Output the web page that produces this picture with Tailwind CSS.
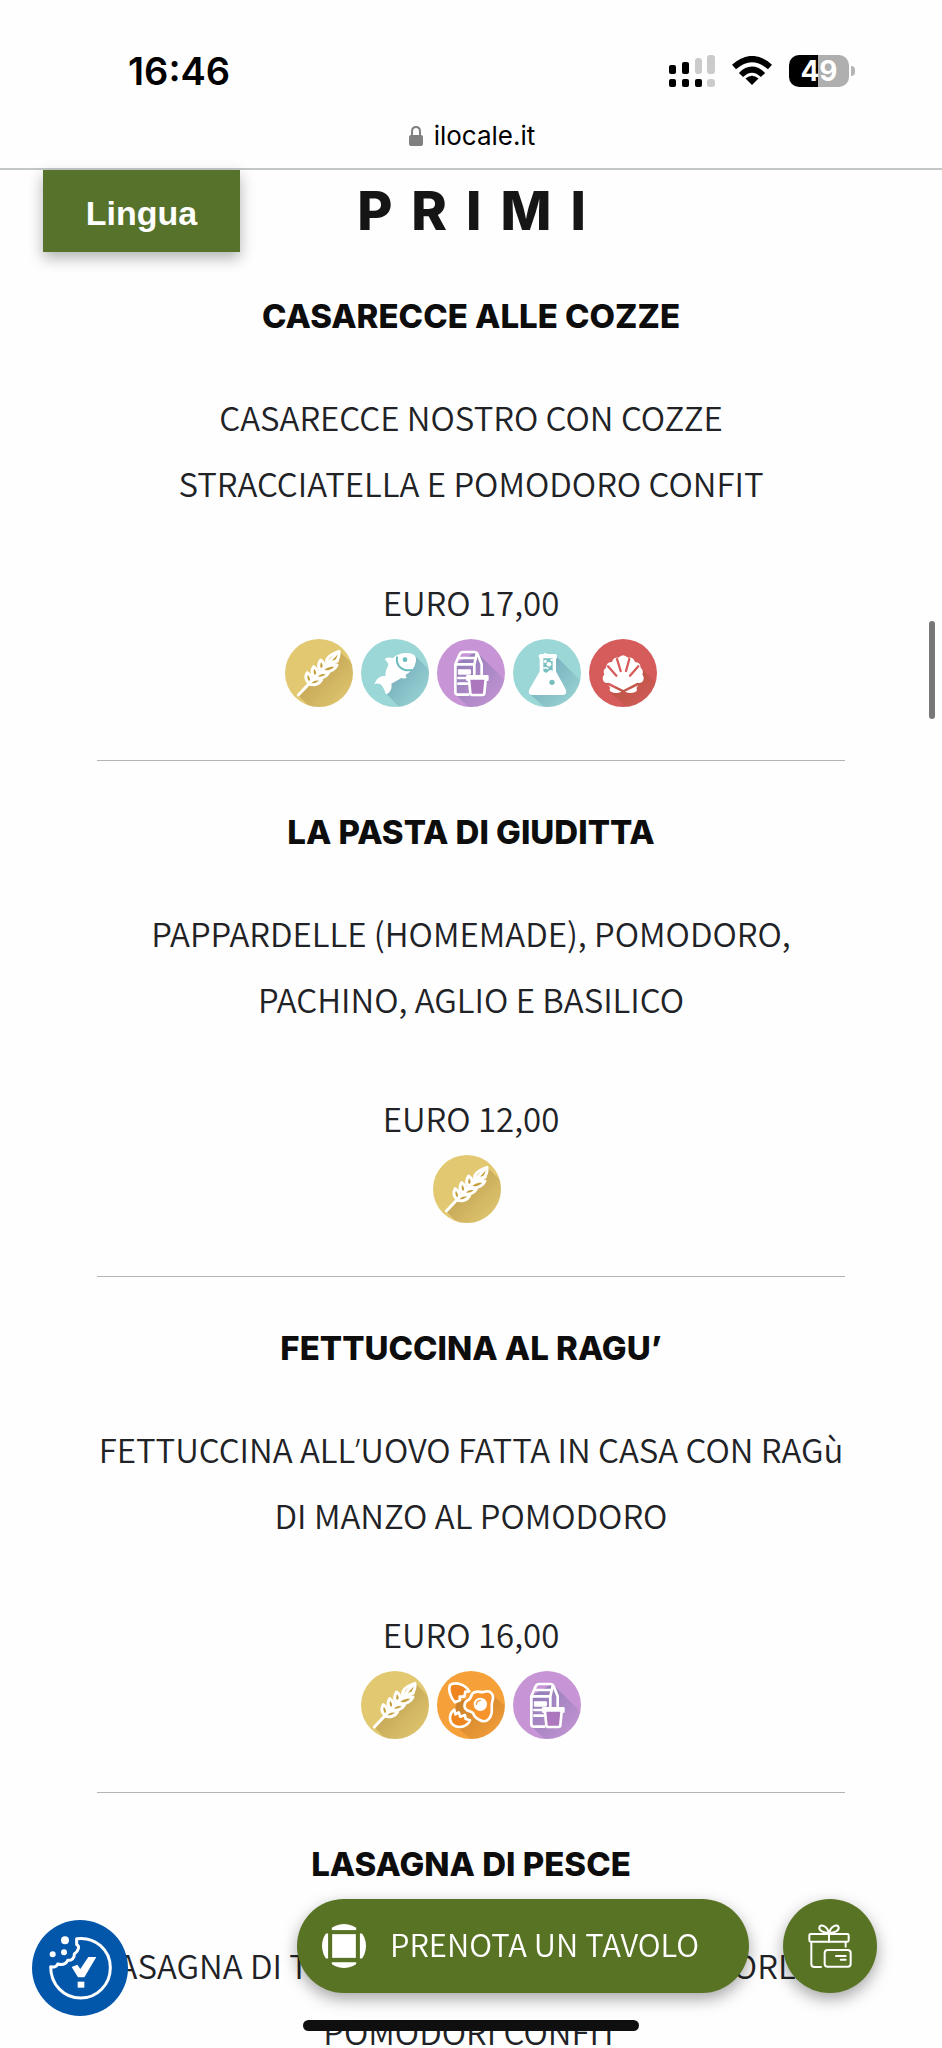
<!DOCTYPE html>
<html lang="it">
<head>
  <meta charset="UTF-8">
  <meta name="viewport" content="width=device-width, initial-scale=1.0">
  <title>Menu - Primi</title>
  <script src="https://cdn.jsdelivr.net/npm/@tailwindcss/browser@4"></script>
</head>
<body class="bg-[#fefefe] text-[#212226] font-['Noto_Sans_CJK_SC',sans-serif] font-[350] h-screen overflow-hidden">

  <!-- Icone allergeni -->
  <svg class="absolute size-0" aria-hidden="true">
    <defs>
      <linearGradient id="shade" x1="0.1" y1="0.1" x2="0.75" y2="0.75">
        <stop offset="0" stop-color="#7a4a10" stop-opacity=".36"/>
        <stop offset="1" stop-color="#7a4a10" stop-opacity=".03"/>
      </linearGradient>
      <linearGradient id="shade-cool" x1="0.1" y1="0.1" x2="0.75" y2="0.75">
        <stop offset="0" stop-color="#2b4f80" stop-opacity=".34"/>
        <stop offset="1" stop-color="#2b4f80" stop-opacity=".03"/>
      </linearGradient>
      <clipPath id="disc"><circle cx="102" cy="102" r="102"/></clipPath>
    </defs>
    <symbol id="wheat" viewBox="0 0 204 204">
      <circle cx="102" cy="102" r="102" fill="#e1c871"/>
      <path clip-path="url(#disc)" d="M162 36 L230 104 L130 230 L100 230 L40 169 Z" fill="url(#shade)"/>
      <g fill="none" stroke="#fff" stroke-width="9" stroke-linecap="round" stroke-linejoin="round">
        <path d="M40 168 L72 134"/>
        <path fill="#c4a03c" d="M72 134 C60 122 61 110 67 101 C77 107 81 118 79 129 Z"/>
        <path fill="#c4a03c" d="M90 116 C78 104 80 92 86 83 C96 89 100 100 97 111 Z"/>
        <path fill="#c4a03c" d="M109 96 C98 84 100 72 107 63 C117 70 120 81 116 92 Z"/>
        <path fill="#c4a03c" d="M127 76 C120 62 130 48 162 37 C164 57 154 76 127 76 Z"/>
        <path fill="#c4a03c" d="M72 134 C80 121 96 117 110 122 C103 135 86 142 72 134 Z"/>
        <path fill="#c4a03c" d="M92 114 C100 101 116 98 130 103 C123 115 105 122 92 114 Z"/>
        <path fill="#c4a03c" d="M111 94 C119 81 137 77 156 78 C148 96 125 104 111 94 Z"/>
        <path d="M127 76 C138 70 148 67 157 66 M72 134 L158 40"/>
      </g>
    </symbol>
    <symbol id="fish" viewBox="0 0 204 204">
      <circle cx="102" cy="102" r="102" fill="#9ad7d6"/>
      <path clip-path="url(#disc)" d="M160 48 L230 118 L160 230 L130 220 L76 164 L80 80 Z" fill="url(#shade-cool)"/>
      <path fill="#fff" d="M165 62 C167 46 150 40 130 42 C114 44 102 50 95 58 C87 54 77 56 71 61 C77 66 81 72 82 78 C75 90 73 102 73 112 C62 108 47 116 40 136 C50 131 60 135 65 143 C70 151 72 158 75 166 C88 161 94 148 91 134 C102 128 112 123 120 117 C125 119 132 119 138 116 C135 113 133 110 134 107 C152 98 164 82 165 62 Z"/>
      <path fill="none" stroke="#6bbcbd" stroke-width="6" stroke-linecap="round" d="M108 55 C104 78 122 98 151 93"/>
      <circle cx="132" cy="62" r="7" fill="#6bbcbd"/>
    </symbol>
    <symbol id="milk" viewBox="0 0 204 204">
      <circle cx="102" cy="102" r="102" fill="#c795d5"/>
      <path clip-path="url(#disc)" d="M118 38 L230 150 L130 230 L110 220 L56 166 L60 72 Z" fill="url(#shade-cool)"/>
      <g fill="none" stroke="#fff" stroke-width="8" stroke-linecap="round" stroke-linejoin="round">
        <path d="M94 167 H63 Q55 167 55 160 V76 L68 46 Q71 39 78 39 H112 Q119 39 122 46 L134 76 V106"/>
        <path d="M58 76 H112 V106 M119 45 L112 76 V90 M68 57 H114 M66 95 H98 V103 H66 M64 117 H88 M64 134 H90"/>
        <path fill="#ad77be" d="M91 112 H151 V122 H146 L142 162 Q142 168 136 168 H106 Q101 168 100 162 L96 122 H91 Z"/>
        <path d="M94 118 H148"/>
      </g>
    </symbol>
    <symbol id="flask" viewBox="0 0 204 204">
      <circle cx="102" cy="102" r="102" fill="#9ad7d6"/>
      <path clip-path="url(#disc)" d="M128 50 L230 152 L130 235 L50 165 L84 100 Z" fill="url(#shade-cool)"/>
      <path fill="#fff" stroke="#fff" stroke-width="6" stroke-linejoin="round" d="M80 52 Q80 48 86 48 H93 Q97 42 101 48 H124 Q130 48 129 54 L126 60 V98 L156 154 Q159 165 150 165 H57 Q48 165 51 154 L83 98 V60 Z"/>
      <path fill="#79bfc0" d="M91 58 H119 V97 Q113 90 107 96 Q101 104 94 99 L91 96 Z"/>
      <circle cx="97" cy="67" r="5" fill="#fff"/>
      <circle cx="108" cy="76" r="7" fill="#fff"/>
      <circle cx="116" cy="63" r="4" fill="#fff"/>
      <path fill="none" stroke="#fff" stroke-width="4" d="M91 88 Q98 84 106 90"/>
      <circle cx="117" cy="130" r="8" fill="#79bfc0"/>
    </symbol>
    <symbol id="shell" viewBox="0 0 204 204">
      <circle cx="102" cy="102" r="102" fill="#d65b5b"/>
      <path clip-path="url(#disc)" d="M155 86 L230 160 L140 230 L62 158 Z" fill="url(#shade)"/>
      <path fill="#fff" d="M103 153 L60 131 Q48 134 43 126 Q38 116 46 106 Q40 94 51 86 Q52 69 69 69 Q74 54 88 56 Q102 41 117 56 Q132 53 138 69 Q154 70 155 86 Q165 94 160 106 Q167 116 162 126 Q157 134 145 131 Z"/>
      <path fill="#fff" d="M58 139 L98 158 Q80 166 66 158 Q59 154 64 147 Z M148 139 L108 158 Q126 166 140 158 Q147 154 142 147 Z"/>
      <path fill="none" stroke="#d65b5b" stroke-width="7" stroke-linecap="round" d="M84 60 L95 96 M121 60 L111 96 M57 82 L82 110 M148 82 L123 110"/>
    </symbol>
    <symbol id="egg" viewBox="0 0 204 204">
      <circle cx="102" cy="102" r="102" fill="#f6a03a"/>
      <path clip-path="url(#disc)" d="M166 70 L230 130 L130 230 L45 155 L60 90 Z" fill="url(#shade)"/>
      <g fill="#ef851f" stroke="#fff" stroke-width="8" stroke-linejoin="round" stroke-linecap="round">
        <path d="M54 94 C40 79 33 57 39 42 C56 31 85 40 97 61 L85 62 L82 77 L68 77 L69 88 Z"/>
        <path d="M52 116 C36 127 35 149 48 161 C64 174 91 168 99 148 L86 144 L84 132 L70 137 L65 124 L55 130 Z"/>
        <path fill="#f6942b" d="M106 68 C118 54 133 68 143 62 C160 57 173 70 166 91 C162 101 166 112 164 124 C161 145 145 157 128 147 C118 142 112 140 110 130 C108 122 98 122 89 117 C78 109 82 91 94 87 C102 84 101 75 106 68 Z"/>
      </g>
      <circle cx="130" cy="100" r="18" fill="#fff" stroke="#fff" stroke-width="4"/>
      <path fill="none" stroke="#f29a45" stroke-width="4" stroke-linecap="round" d="M118 100 Q119 89 130 88"/>
    </symbol>
  </svg>

  <!-- Barra di stato e indirizzo -->
  <header class="border-b-2 border-[#c4c8c8] text-black font-['Inter',sans-serif] font-normal">
    <div class="flex items-center justify-between pl-32 pr-[87px] pt-[46px] h-24">
      <time class="text-[38px] leading-[50px] font-semibold">16:46</time>
      <div class="flex items-center gap-4">
        <svg class="w-[46px] h-8" viewBox="0 0 46 32" aria-label="Segnale">
          <g fill="#000">
            <rect x="0" y="10" width="7" height="9" rx="2"/>
            <rect x="13" y="7" width="7" height="12" rx="2"/>
            <rect x="0" y="24" width="7" height="8" rx="2"/>
            <rect x="13" y="24" width="7" height="8" rx="2"/>
            <rect x="26" y="24" width="7" height="8" rx="2"/>
          </g>
          <g fill="#cbcbcb">
            <rect x="26" y="3" width="7" height="16" rx="3"/>
            <rect x="38" y="0" width="8" height="19" rx="3"/>
            <rect x="38" y="24" width="8" height="8" rx="3"/>
          </g>
        </svg>
        <svg class="w-[42px] h-[30px]" viewBox="0 0 42 30" fill="none" stroke="#000" stroke-width="6" aria-label="Wi-Fi">
          <path d="M3 11 Q21 -5 39 11"/>
          <path d="M10 19 Q21 8 32 19"/>
          <path d="M21 29 L14.500 22.500 Q21 17 27.500 22.500 Z" fill="#000" stroke="none"/>
        </svg>
        <div class="flex items-center gap-[2px]">
          <div class="flex items-center justify-center w-[60px] h-8 rounded-[10px] bg-linear-to-r from-black from-49% to-[#afafaf] to-49% text-white text-[28px] leading-8 font-bold">49</div>
          <div class="w-1 h-[10px] rounded-r-full bg-[#b5b5b5]"></div>
        </div>
      </div>
    </div>
    <div class="flex items-center justify-center gap-[11px] h-[72px] pt-2 pl-[2px]">
      <svg class="w-[14px] h-5" viewBox="0 0 14 20" aria-hidden="true">
        <path d="M3 10 V5.500 Q3 1 7 1 Q11 1 11 5.500 V10" fill="none" stroke="#808080" stroke-width="2"/>
        <rect y="9" width="14" height="11" rx="2" fill="#808080"/>
      </svg>
      <span class="text-[26px] leading-8">ilocale.it</span>
    </div>
  </header>

  <main class="relative px-[97px]">
    <button type="button" class="absolute left-[43px] top-0 w-[197px] h-[82px] pt-1 bg-[#56722b] text-white text-[34px] leading-[66px] font-bold font-['Liberation_Sans',sans-serif] shadow-[0_6px_14px_rgba(0,0,0,0.3)]">Lingua</button>

    <h1 class="h-[75px] pt-2 pl-5 text-center text-[#151515] text-[54px] leading-[66px] font-extrabold tracking-[19px] font-['Inter',sans-serif]">PRIMI</h1>

    <article class="flex flex-col items-center pt-[38px] pb-[53px] border-b border-[#b3b5b5] text-[33px] leading-[66px] text-center">
      <h2 class="text-[#0d0d0d] text-[33px] font-extrabold font-['Inter',sans-serif]">CASARECCE ALLE COZZE</h2>
      <p class="mt-[35px]">CASARECCE NOSTRO CON COZZE<br>STRACCIATELLA E POMODORO CONFIT</p>
      <p class="mt-[53px]">EURO 17,00</p>
      <div class="flex gap-2 mt-1">
        <svg class="size-[68px]" aria-label="Glutine"><use href="#wheat"/></svg>
        <svg class="size-[68px]" aria-label="Pesce"><use href="#fish"/></svg>
        <svg class="size-[68px]" aria-label="Latte"><use href="#milk"/></svg>
        <svg class="size-[68px]" aria-label="Solfiti"><use href="#flask"/></svg>
        <svg class="size-[68px]" aria-label="Molluschi"><use href="#shell"/></svg>
      </div>
    </article>

    <article class="flex flex-col items-center pt-[38px] pb-[53px] border-b border-[#b3b5b5] text-[33px] leading-[66px] text-center">
      <h2 class="text-[#0d0d0d] text-[33px] font-extrabold font-['Inter',sans-serif]">LA PASTA DI GIUDITTA</h2>
      <p class="mt-[35px]">PAPPARDELLE (HOMEMADE), POMODORO,<br>PACHINO, AGLIO E BASILICO</p>
      <p class="mt-[53px]">EURO 12,00</p>
      <div class="flex gap-2 mt-1 pr-2">
        <svg class="size-[68px]" aria-label="Glutine"><use href="#wheat"/></svg>
      </div>
    </article>

    <article class="flex flex-col items-center pt-[38px] pb-[53px] border-b border-[#b3b5b5] text-[33px] leading-[66px] text-center">
      <h2 class="text-[#0d0d0d] text-[33px] font-extrabold font-['Inter',sans-serif]">FETTUCCINA AL RAGU’</h2>
      <p class="mt-[35px] whitespace-nowrap">FETTUCCINA ALL<span class="font-['Noto_Sans',sans-serif] leading-none">’</span>UOVO FATTA IN CASA CON RAGù<br>DI MANZO AL POMODORO</p>
      <p class="mt-[53px]">EURO 16,00</p>
      <div class="flex gap-2 mt-1">
        <svg class="size-[68px]" aria-label="Glutine"><use href="#wheat"/></svg>
        <svg class="size-[68px]" aria-label="Uova"><use href="#egg"/></svg>
        <svg class="size-[68px]" aria-label="Latte"><use href="#milk"/></svg>
      </div>
    </article>

    <article class="flex flex-col items-center pt-[38px] text-[33px] leading-[66px] text-center">
      <h2 class="text-[#0d0d0d] text-[33px] font-extrabold font-['Inter',sans-serif]">LASAGNA DI PESCE</h2>
      <p class="mt-[35px] whitespace-nowrap">LASAGNA DI TONNO CON SCAROLA, SCAMORLA E<br>POMODORI CONFIT</p>
    </article>
  </main>

  <!-- Barra di scorrimento -->
  <div class="fixed right-[7px] top-[621px] w-[6px] h-[98px] rounded-full bg-[#777]"></div>

  <!-- Pulsanti fissi -->
  <button type="button" aria-label="Preferenze cookie" class="fixed left-8 bottom-8 size-24 rounded-full bg-[#0357ab]">
    <svg class="size-24" viewBox="0 0 288 288" aria-hidden="true">
      <path d="M134 56 C190 49 235 90 235 143 C235 194 195 234 146 234 C96 234 56 194 56 140 C66 144 75 138 77 132 C92 136 102 132 107 121 C119 122 128 114 127 102 C140 93 144 78 134 74 Z" fill="none" stroke="#fff" stroke-width="9" stroke-linejoin="round"/>
      <g fill="#fff">
        <circle cx="99" cy="61" r="12"/>
        <circle cx="62" cy="103" r="9"/>
        <circle cx="96" cy="97" r="9"/>
        <path d="M119 141 L136 134 L145 147 L169 111 H193 L157 172 H138 Z"/>
        <rect x="137" y="185" width="20" height="18"/>
      </g>
    </svg>
  </button>

  <button type="button" class="fixed left-[297px] bottom-[55px] flex items-center gap-6 w-[452px] h-[94px] pl-[25px] rounded-full bg-[#587324] text-white text-[31px] leading-[44px] whitespace-nowrap shadow-[0_6px_16px_rgba(0,0,0,0.35)]">
    <svg class="size-11 shrink-0" viewBox="0 0 130 130" fill="#fff" aria-hidden="true">
      <defs><clipPath id="plate"><circle cx="65" cy="65" r="65"/></clipPath></defs>
      <g clip-path="url(#plate)">
        <rect x="30" y="30" width="70" height="70"/>
        <rect x="29" y="0" width="72" height="18"/>
        <rect x="29" y="113" width="72" height="17"/>
        <rect x="0" y="28" width="18" height="74"/>
        <rect x="112" y="28" width="18" height="74"/>
      </g>
    </svg>
    <span class="pb-1">PRENOTA UN TAVOLO</span>
  </button>

  <button type="button" aria-label="Buono regalo" class="fixed right-[65px] bottom-[55px] flex items-center justify-center size-[94px] rounded-full bg-[#587324] shadow-[0_6px_16px_rgba(0,0,0,0.35)]">
    <svg class="size-11" viewBox="0 0 132 132" fill="none" stroke="#fff" stroke-width="6" stroke-linecap="round" stroke-linejoin="round" aria-hidden="true">
      <rect x="4" y="30" width="118" height="23" rx="4"/>
      <path d="M63 27 V53 M10 54 V120 Q10 129 19 129 H39 M113 54 V68 M63 27 C47 26 32 20 34 10 C38 -2 58 6 63 27 C68 6 88 -2 92 10 C94 20 79 26 63 27"/>
      <rect x="50" y="78" width="78" height="50" rx="9"/>
      <path d="M84 96 H113 M98 107 H113"/>
    </svg>
  </button>

  <div class="fixed left-1/2 bottom-[17px] w-[336px] h-[11px] -translate-x-1/2 rounded-full bg-[#0f0f0f]"></div>
</body>
</html>
